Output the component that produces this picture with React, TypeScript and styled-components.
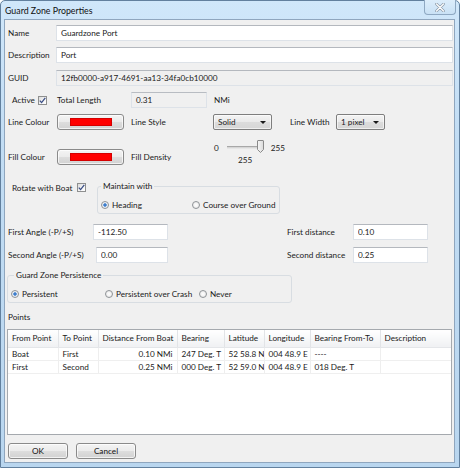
import React from "react";
import styled, { createGlobalStyle } from "styled-components";

const Global = createGlobalStyle`
  html, body { margin: 0; padding: 0; background: #ffffff; }
  body {
    font-family: Lato, "Liberation Sans", sans-serif;
    font-size: 8.2px;
    color: #1b1b1b;
  }
  * { box-sizing: border-box; }
`;

const Window = styled.div`
  position: relative;
  width: 460px;
  height: 468px;
  border: 1px solid #62809e;
  border-radius: 5px 5px 0 0;
  background: linear-gradient(180deg, #d0e7fa 0%, #c2ddf4 30%, #b9d6ef 100%);
  display: flex;
  flex-direction: column;
  padding: 0 4px 4px 3px;
`;

const TitleBar = styled.div`
  height: 18px;
  display: flex;
  align-items: center;
  padding-left: 1px;
  font-size: 8.8px;
  color: #111;
`;

const CloseButton = styled.div`
  position: absolute;
  top: -1px;
  right: 3px;
  width: 32px;
  height: 15px;
  border: 1px solid #8ea8c2;
  border-top: none;
  border-radius: 0 0 4px 4px;
  background: linear-gradient(180deg, #dcedfb 0%, #c9e1f5 100%);
  display: flex;
  align-items: center;
  justify-content: center;
`;

const Content = styled.div`
  flex: 1;
  background: #f0f0f0;
  border: 1px solid #8fa6be;
  display: flex;
  flex-direction: column;
  padding: 0 1px 0 3px;
`;

const Row = styled.div<{ $mt: number; $h: number; $top?: boolean }>`
  display: flex;
  align-items: ${(p) => (p.$top ? "flex-start" : "center")};
  height: ${(p) => p.$h}px;
  margin-top: ${(p) => p.$mt}px;
  flex-shrink: 0;
`;

const Label = styled.span<{ $w?: number; $ml?: number; $pl?: number; $mt?: number }>`
  display: inline-block;
  white-space: nowrap;
  ${(p) => (p.$w !== undefined ? `width: ${p.$w}px; flex-shrink: 0;` : "")}
  margin-left: ${(p) => p.$ml ?? 0}px;
  padding-left: ${(p) => p.$pl ?? 0}px;
  margin-top: ${(p) => p.$mt ?? 0}px;
  line-height: 14px;
`;

const TextInput = styled.input<{ $w?: number; $ro?: boolean }>`
  font: inherit;
  color: #1b1b1b;
  height: 16px;
  ${(p) => (p.$w !== undefined ? `width: ${p.$w}px; flex-shrink: 0;` : "flex: 1; min-width: 0;")}
  padding: 0 0 0 4px;
  margin: 0;
  border: 1px solid #dde2e8;
  border-top-color: #b4b8be;
  background: ${(p) => (p.$ro ? "#f0f0f0" : "#ffffff")};
  outline: none;
`;

const ReadBox = styled.div<{ $w: number }>`
  width: ${(p) => p.$w}px;
  flex-shrink: 0;
  height: 16px;
  line-height: 14px;
  padding-left: 4px;
  border: 1px solid #dde2e8;
  border-top-color: #b8bcc2;
  background: #f0f0f0;
`;

const CheckBoxBox = styled.span<{ $ml?: number; $mt?: number }>`
  display: inline-flex;
  align-items: center;
  justify-content: center;
  width: 9px;
  height: 9px;
  margin-left: ${(p) => p.$ml ?? 0}px;
  margin-top: ${(p) => p.$mt ?? 0}px;
  border: 1px solid #8e8f8f;
  background: linear-gradient(135deg, #dcdcdc 0%, #f6f6f6 60%, #ffffff 100%);
  flex-shrink: 0;
`;

const WinButton = styled.div<{ $w: number; $ml?: number }>`
  width: ${(p) => p.$w}px;
  height: 16px;
  flex-shrink: 0;
  margin-left: ${(p) => p.$ml ?? 0}px;
  border: 1px solid #8a8a8a;
  border-radius: 3px;
  background: linear-gradient(180deg, #f4f4f4 0%, #ebebeb 48%, #dddddd 52%, #d2d2d2 100%);
  box-shadow: inset 0 0 0 1px rgba(255, 255, 255, 0.7);
  display: flex;
  align-items: center;
  justify-content: center;
  color: #111;
`;

const Swatch = styled.span`
  width: 42px;
  height: 8px;
  background: #ff0000;
  border: 1px solid #d40000;
`;

const Select = styled.div<{ $w: number }>`
  width: ${(p) => p.$w}px;
  height: 16px;
  flex-shrink: 0;
  border: 1px solid #7e7e7e;
  border-radius: 2px;
  background: linear-gradient(180deg, #f4f4f4 0%, #eaeaea 48%, #dcdcdc 52%, #d6d6d6 100%);
  box-shadow: inset 0 0 0 1px rgba(255, 255, 255, 0.6);
  display: flex;
  align-items: center;
  justify-content: space-between;
  padding: 0 5px 0 4px;
`;

const Arrow = styled.span`
  width: 0;
  height: 0;
  border-left: 3px solid transparent;
  border-right: 3px solid transparent;
  border-top: 3px solid #1a1a1a;
`;

const SliderWrap = styled.div`
  display: flex;
  flex-direction: column;
  align-self: flex-start;
  margin-top: -9px;
  width: 80px;
`;

const SliderTop = styled.div`
  display: flex;
  align-items: center;
  height: 15px;
`;

const Track = styled.div`
  position: relative;
  width: 36px;
  height: 3px;
  margin-left: 8px;
  border-top: 1px solid #a8a8a8;
  border-bottom: 1px solid #e6e6e6;
  background: #d6d6d6;
`;

const Thumb = styled.svg`
  position: absolute;
  right: -1px;
  top: -7px;
`;

const SliderValue = styled.span`
  padding-left: 25px;
  line-height: 11px;
`;

const Group = styled.fieldset<{ $w: number; $h: number; $ml?: number }>`
  width: ${(p) => p.$w}px;
  height: ${(p) => p.$h}px;
  flex-shrink: 0;
  margin: 0 0 0 ${(p) => p.$ml ?? 0}px;
  padding: 0 0 0 3px;
  border: 1px solid #d8dde2;
  border-radius: 3px;
  display: flex;
  align-items: center;
  min-width: 0;
`;

const GroupLegend = styled.legend<{ $ml: number }>`
  margin-left: ${(p) => p.$ml}px;
  padding: 0 2px;
  line-height: 13px;
`;

const RadioItem = styled.span<{ $w?: number }>`
  display: inline-flex;
  align-items: center;
  gap: 3px;
  ${(p) => (p.$w !== undefined ? `width: ${p.$w}px;` : "")}
  flex-shrink: 0;
  white-space: nowrap;
  margin-top: 4px;
`;

const RadioCircle = styled.span<{ $on?: boolean }>`
  width: 8px;
  height: 8px;
  border-radius: 50%;
  border: 1px solid #8f9397;
  background: radial-gradient(circle at 50% 50%, ${(p) =>
    p.$on ? "#2f6fc0 0%, #4f8bd4 35%, #e9eef4 45%, #f4f4f4 100%" : "#ffffff 0%, #e4e4e4 100%"});
  flex-shrink: 0;
`;

const TableBox = styled.div`
  width: 445px;
  height: 106px;
  margin-top: 5px;
  margin-left: -1px;
  flex-shrink: 0;
  border: 1px solid #a5a9ae;
  background: #ffffff;
  overflow: hidden;
`;

const Grid = styled.table`
  border-collapse: collapse;
  table-layout: fixed;
  width: 443px;
  font: inherit;
`;

const Th = styled.th<{ $w: number }>`
  width: ${(p) => p.$w}px;
  height: 17px;
  padding: 0 0 0 4px;
  font-weight: normal;
  text-align: left;
  white-space: nowrap;
  overflow: hidden;
  background: linear-gradient(180deg, #ffffff 0%, #f7f8f9 50%, #f0f1f3 100%);
  border-right: 1px solid #e2e4e7;
  border-bottom: 1px solid #e4e6e9;
`;

const Td = styled.td<{ $right?: boolean }>`
  height: 13px;
  padding: ${(p) => (p.$right ? "0 4px 0 0" : "0 0 0 4px")};
  text-align: ${(p) => (p.$right ? "right" : "left")};
  white-space: nowrap;
  overflow: hidden;
  border-right: 1px solid #eeeeee;
  border-bottom: 1px solid #efefef;
  line-height: 12px;
`;

const Check = () => (
  <svg width="7" height="7" viewBox="0 0 7 7">
    <path d="M0.8 3.6 L2.6 5.6 L6.3 0.8" fill="none" stroke="#3b4f86" strokeWidth="1.3" />
  </svg>
);

const columns = [
  { t: "From Point", w: 50 },
  { t: "To Point", w: 40 },
  { t: "Distance From Boat", w: 79 },
  { t: "Bearing", w: 47 },
  { t: "Latitude", w: 40 },
  { t: "Longitude", w: 46 },
  { t: "Bearing From-To", w: 70 },
  { t: "Description", w: 71 },
];

const rows = [
  ["Boat", "First", "0.10 NMi", "247 Deg. T", "52 58.8 N", "004 48.9 E", "----", ""],
  ["First", "Second", "0.25 NMi", "000 Deg. T", "52 59.0 N", "004 48.9 E", "018 Deg. T", ""],
];

export default function App() {
  return (
    <>
      <Global />
      <Window>
        <TitleBar>Guard Zone Properties</TitleBar>
        <CloseButton>
          <svg width="10" height="9" viewBox="0 0 10 9">
            <path d="M1.5 1 L8.5 8 M8.5 1 L1.5 8" stroke="#8d9cab" strokeWidth="2.6" strokeLinecap="round" />
            <path d="M1.5 1 L8.5 8 M8.5 1 L1.5 8" stroke="#ffffff" strokeWidth="1.2" strokeLinecap="round" />
          </svg>
        </CloseButton>
        <Content>
          <Row $mt={5} $h={16}>
            <Label $w={48}>Name</Label>
            <TextInput readOnly value="Guardzone Port" />
          </Row>
          <Row $mt={6} $h={16}>
            <Label $w={48}>Description</Label>
            <TextInput readOnly value="Port" />
          </Row>
          <Row $mt={7} $h={16}>
            <Label $w={48}>GUID</Label>
            <TextInput readOnly $ro value="12fb0000-a917-4691-aa13-34fa0cb10000" />
          </Row>
          <Row $mt={6} $h={16}>
            <Label $w={30} $pl={4}>Active</Label>
            <CheckBoxBox>
              <Check />
            </CheckBoxBox>
            <Label $w={74} $ml={10}>Total Length</Label>
            <ReadBox $w={76}>0.31</ReadBox>
            <Label $ml={7}>NMi</Label>
          </Row>
          <Row $mt={6} $h={16}>
            <Label $w={49}>Line Colour</Label>
            <WinButton $w={67}>
              <Swatch />
            </WinButton>
            <Label $w={82} $ml={7}>Line Style</Label>
            <Select $w={59}>
              <span>Solid</span>
              <Arrow />
            </Select>
            <Label $w={46} $ml={18}>Line Width</Label>
            <Select $w={49}>
              <span>1 pixel</span>
              <Arrow />
            </Select>
          </Row>
          <Row $mt={19} $h={16}>
            <Label $w={49}>Fill Colour</Label>
            <WinButton $w={67}>
              <Swatch />
            </WinButton>
            <Label $w={82} $ml={7}>Fill Density</Label>
            <SliderWrap>
              <SliderTop>
                <Label $ml={1}>0</Label>
                <Track>
                  <Thumb width="7" height="13" viewBox="0 0 7 13">
                    <defs>
                      <linearGradient id="tg" x1="0" y1="0" x2="1" y2="0">
                        <stop offset="0" stopColor="#f7f7f7" />
                        <stop offset="1" stopColor="#dadada" />
                      </linearGradient>
                    </defs>
                    <path
                      d="M1 0.5 H6 Q6.5 0.5 6.5 1 V9.5 L3.5 12.5 L0.5 9.5 V1 Q0.5 0.5 1 0.5 Z"
                      fill="url(#tg)"
                      stroke="#8a8a8a"
                      strokeWidth="1"
                    />
                  </Thumb>
                </Track>
                <Label $ml={8}>255</Label>
              </SliderTop>
              <SliderValue>255</SliderValue>
            </SliderWrap>
          </Row>
          <Row $mt={15} $h={34} $top>
            <Label $w={69} $pl={4} $mt={1}>Rotate with Boat</Label>
            <CheckBoxBox $mt={3}>
              <Check />
            </CheckBoxBox>
            <Group $w={183} $h={34} $ml={11}>
              <GroupLegend $ml={0}>Maintain with</GroupLegend>
              <RadioItem $w={91}>
                <RadioCircle $on />
                Heading
              </RadioItem>
              <RadioItem>
                <RadioCircle />
                Course over Ground
              </RadioItem>
            </Group>
          </Row>
          <Row $mt={10} $h={16}>
            <Label $w={85}>First Angle (-P/+S)</Label>
            <TextInput readOnly $w={75} value="-112.50" />
            <Label $w={66} $ml={119}>First distance</Label>
            <TextInput readOnly $w={75} value="0.10" />
          </Row>
          <Row $mt={7} $h={16}>
            <Label $w={88}>Second Angle (-P/+S)</Label>
            <TextInput readOnly $w={72} value="0.00" />
            <Label $w={66} $ml={119}>Second distance</Label>
            <TextInput readOnly $w={75} value="0.25" />
          </Row>
          <Row $mt={6} $h={34} $top>
            <Group $w={285} $h={34} $ml={-1}>
              <GroupLegend $ml={3}>Guard Zone Persistence</GroupLegend>
              <RadioItem $w={94}>
                <RadioCircle $on />
                Persistent
              </RadioItem>
              <RadioItem $w={94}>
                <RadioCircle />
                Persistent over Crash
              </RadioItem>
              <RadioItem>
                <RadioCircle />
                Never
              </RadioItem>
            </Group>
          </Row>
          <Row $mt={7} $h={14}>
            <Label>Points</Label>
          </Row>
          <TableBox>
            <Grid>
              <thead>
                <tr>
                  {columns.map((c) => (
                    <Th key={c.t} $w={c.w}>
                      {c.t}
                    </Th>
                  ))}
                </tr>
              </thead>
              <tbody>
                {rows.map((r, i) => (
                  <tr key={i}>
                    {r.map((v, j) => (
                      <Td key={j} $right={j === 2}>
                        {v}
                      </Td>
                    ))}
                  </tr>
                ))}
              </tbody>
            </Grid>
          </TableBox>
          <Row $mt={8} $h={16}>
            <WinButton $w={60} $ml={0}>OK</WinButton>
            <WinButton $w={60} $ml={8}>Cancel</WinButton>
          </Row>
        </Content>
      </Window>
    </>
  );
}
